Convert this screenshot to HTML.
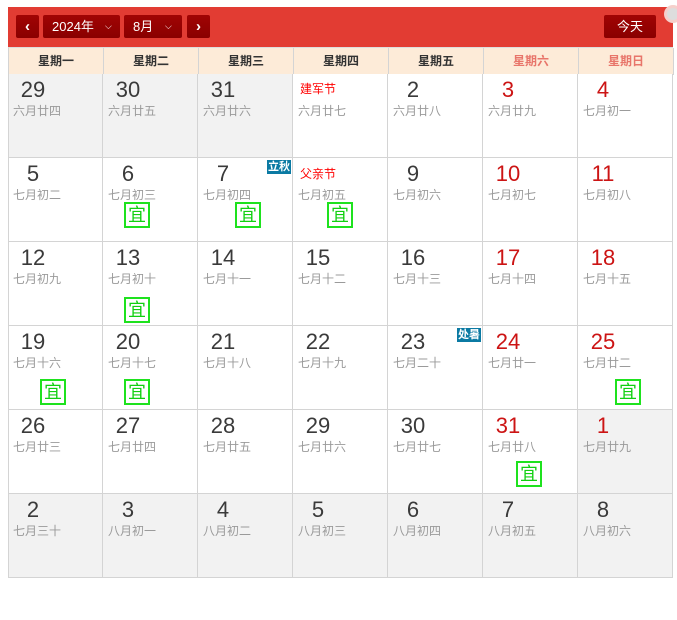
<!DOCTYPE html>
<html><head><meta charset="utf-8"><style>
*{margin:0;padding:0;box-sizing:border-box}
body{width:677px;height:620px;background:#fff;position:relative;overflow:hidden;font-family:"Liberation Sans","Noto Sans CJK SC",sans-serif}
.hd{position:absolute;left:8px;top:7px;width:665px;height:40px;background:#e23c33}
.btn{position:absolute;top:8px;height:23px;background:linear-gradient(#a10404,#8a0000);border-radius:2px;color:#fff;font-size:13px;line-height:23px}
.wk{position:absolute;left:8px;top:47px;width:665px;height:27px;background:#fdebd8;border-top:1px solid #ddd;border-left:1px solid #d4d4d4}
.wk div{position:absolute;top:0;width:95px;height:27px;border-right:1px solid #d4d4d4;border-bottom:1px solid #d4d4d4;text-align:center;line-height:26px;font-size:12px;font-weight:bold;color:#333}
.wk .we{color:#e8756a}
.c{position:absolute;width:95px;height:84px;border-right:1px solid #d4d4d4;border-bottom:1px solid #d4d4d4;background:#fff}
.g{background:#f2f2f2}
.n{position:absolute;left:11px;top:2px;width:28px;text-align:center;font-size:22px;color:#3a3a3a;line-height:28px}
.r .n{color:#cc1414}
.l{position:absolute;left:5px;top:30px;font-size:12px;color:#9a9a9a;white-space:nowrap;line-height:14px}
.f{position:absolute;left:7px;top:8px;font-size:12px;color:#f00;line-height:14px}
.y{position:absolute;width:26px;height:26px;border:2px solid #1ee21e;color:#10d010;font-size:18px;line-height:22px;text-align:center}
.b{position:absolute;width:24px;height:14px;background:#0b7aa3;color:#fff;font-size:11px;font-weight:bold;line-height:14px;text-align:center}
</style></head><body>
<div class="hd">
 <div class="btn" style="left:8px;width:23px;text-align:center;font-weight:bold;font-size:15px">&#x2039;</div>
 <div class="btn" style="left:35px;width:77px;padding-left:9px">2024年 <span style="position:absolute;left:62px;font-size:9px">&#x2335;</span></div>
 <div class="btn" style="left:116px;width:58px;padding-left:9px">8月 <span style="position:absolute;left:41px;font-size:9px">&#x2335;</span></div>
 <div class="btn" style="left:179px;width:23px;text-align:center;font-weight:bold;font-size:15px">&#x203A;</div>
 <div class="btn" style="left:596px;width:52px;text-align:center">今天</div>
</div>
<div style="position:absolute;left:664px;top:5px;width:18px;height:18px;border-radius:50%;background:#ddd;border:3px solid #f5d0cc"></div>
<div class="wk">
<div style="left:0">星期一</div><div style="left:95px">星期二</div><div style="left:190px">星期三</div><div style="left:285px">星期四</div><div style="left:380px">星期五</div><div class="we" style="left:475px">星期六</div><div class="we" style="left:570px">星期日</div>
</div>

<!-- row1 -->
<div class="c g" style="left:8px;top:74px"><div class="n">29</div><div class="l">六月廿四</div></div>
<div class="c g" style="left:103px;top:74px"><div class="n">30</div><div class="l">六月廿五</div></div>
<div class="c g" style="left:198px;top:74px"><div class="n">31</div><div class="l">六月廿六</div></div>
<div class="c" style="left:293px;top:74px"><div class="f">建军节</div><div class="l">六月廿七</div></div>
<div class="c" style="left:388px;top:74px"><div class="n">2</div><div class="l">六月廿八</div></div>
<div class="c r" style="left:483px;top:74px"><div class="n">3</div><div class="l">六月廿九</div></div>
<div class="c r" style="left:578px;top:74px"><div class="n">4</div><div class="l">七月初一</div></div>
<!-- row2 -->
<div class="c" style="left:8px;top:158px"><div class="n">5</div><div class="l">七月初二</div></div>
<div class="c" style="left:103px;top:158px"><div class="n">6</div><div class="l">七月初三</div></div>
<div class="c" style="left:198px;top:158px"><div class="n">7</div><div class="l">七月初四</div></div>
<div class="c" style="left:293px;top:158px"><div class="f" style="top:9px">父亲节</div><div class="l">七月初五</div></div>
<div class="c" style="left:388px;top:158px"><div class="n">9</div><div class="l">七月初六</div></div>
<div class="c r" style="left:483px;top:158px"><div class="n">10</div><div class="l">七月初七</div></div>
<div class="c r" style="left:578px;top:158px"><div class="n">11</div><div class="l">七月初八</div></div>
<!-- row3 -->
<div class="c" style="left:8px;top:242px"><div class="n">12</div><div class="l">七月初九</div></div>
<div class="c" style="left:103px;top:242px"><div class="n">13</div><div class="l">七月初十</div></div>
<div class="c" style="left:198px;top:242px"><div class="n">14</div><div class="l">七月十一</div></div>
<div class="c" style="left:293px;top:242px"><div class="n">15</div><div class="l">七月十二</div></div>
<div class="c" style="left:388px;top:242px"><div class="n">16</div><div class="l">七月十三</div></div>
<div class="c r" style="left:483px;top:242px"><div class="n">17</div><div class="l">七月十四</div></div>
<div class="c r" style="left:578px;top:242px"><div class="n">18</div><div class="l">七月十五</div></div>
<!-- row4 -->
<div class="c" style="left:8px;top:326px"><div class="n">19</div><div class="l">七月十六</div></div>
<div class="c" style="left:103px;top:326px"><div class="n">20</div><div class="l">七月十七</div></div>
<div class="c" style="left:198px;top:326px"><div class="n">21</div><div class="l">七月十八</div></div>
<div class="c" style="left:293px;top:326px"><div class="n">22</div><div class="l">七月十九</div></div>
<div class="c" style="left:388px;top:326px"><div class="n">23</div><div class="l">七月二十</div></div>
<div class="c r" style="left:483px;top:326px"><div class="n">24</div><div class="l">七月廿一</div></div>
<div class="c r" style="left:578px;top:326px"><div class="n">25</div><div class="l">七月廿二</div></div>
<!-- row5 -->
<div class="c" style="left:8px;top:410px"><div class="n">26</div><div class="l">七月廿三</div></div>
<div class="c" style="left:103px;top:410px"><div class="n">27</div><div class="l">七月廿四</div></div>
<div class="c" style="left:198px;top:410px"><div class="n">28</div><div class="l">七月廿五</div></div>
<div class="c" style="left:293px;top:410px"><div class="n">29</div><div class="l">七月廿六</div></div>
<div class="c" style="left:388px;top:410px"><div class="n">30</div><div class="l">七月廿七</div></div>
<div class="c r" style="left:483px;top:410px"><div class="n">31</div><div class="l">七月廿八</div></div>
<div class="c g r" style="left:578px;top:410px"><div class="n">1</div><div class="l">七月廿九</div></div>
<!-- row6 -->
<div class="c g" style="left:8px;top:494px"><div class="n">2</div><div class="l">七月三十</div></div>
<div class="c g" style="left:103px;top:494px"><div class="n">3</div><div class="l">八月初一</div></div>
<div class="c g" style="left:198px;top:494px"><div class="n">4</div><div class="l">八月初二</div></div>
<div class="c g" style="left:293px;top:494px"><div class="n">5</div><div class="l">八月初三</div></div>
<div class="c g" style="left:388px;top:494px"><div class="n">6</div><div class="l">八月初四</div></div>
<div class="c g" style="left:483px;top:494px"><div class="n">7</div><div class="l">八月初五</div></div>
<div class="c g" style="left:578px;top:494px"><div class="n">8</div><div class="l">八月初六</div></div>
<div style="position:absolute;left:8px;top:74px;width:1px;height:504px;background:#d4d4d4"></div>

<!-- badges -->
<div class="b" style="left:267px;top:160px">立秋</div>
<div class="b" style="left:457px;top:328px">处暑</div>
<!-- yi -->
<div class="y" style="left:124px;top:202px">宜</div>
<div class="y" style="left:235px;top:202px">宜</div>
<div class="y" style="left:327px;top:202px">宜</div>
<div class="y" style="left:124px;top:297px">宜</div>
<div class="y" style="left:40px;top:379px">宜</div>
<div class="y" style="left:124px;top:379px">宜</div>
<div class="y" style="left:615px;top:379px">宜</div>
<div class="y" style="left:516px;top:461px">宜</div>
</body></html>
